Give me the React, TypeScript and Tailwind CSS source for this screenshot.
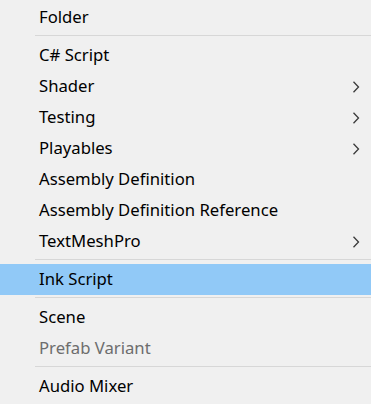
import React from 'react';

type Item =
  | { kind: 'sep' }
  | { kind: 'item'; label: string; sub?: boolean; active?: boolean; disabled?: boolean };

const items: Item[] = [
  { kind: 'item', label: 'Folder' },
  { kind: 'sep' },
  { kind: 'item', label: 'C# Script' },
  { kind: 'item', label: 'Shader', sub: true },
  { kind: 'item', label: 'Testing', sub: true },
  { kind: 'item', label: 'Playables', sub: true },
  { kind: 'item', label: 'Assembly Definition' },
  { kind: 'item', label: 'Assembly Definition Reference' },
  { kind: 'item', label: 'TextMeshPro', sub: true },
  { kind: 'sep' },
  { kind: 'item', label: 'Ink Script', active: true },
  { kind: 'sep' },
  { kind: 'item', label: 'Scene' },
  { kind: 'item', label: 'Prefab Variant', disabled: true },
  { kind: 'sep' },
  { kind: 'item', label: 'Audio Mixer' },
];

const Chevron = () => (
  <svg width="8" height="12" viewBox="0 0 8 12" className="absolute right-[11px] top-1/2 -translate-y-1/2">
    <polyline points="1.5,0.8 6.5,6 1.5,11.2" fill="none" stroke="#3a3a3a" strokeWidth="1.3" />
  </svg>
);

const App: React.FC = () => {
  return (
    <div
      className="h-[404px] w-[371px] overflow-hidden bg-[#f0f0f0] pt-[2px] text-[16.7px] text-black"
      style={{ fontFamily: '"Segoe UI", "Noto Sans", "Open Sans", sans-serif' }}
    >
      {items.map((it, i) =>
        it.kind === 'sep' ? (
          <div key={i} className="h-[7px] pt-[2px] pl-[35px]">
            <div className="h-px bg-[#d7d7d7]" />
          </div>
        ) : (
          <div
            key={i}
            className={`relative flex h-[31px] items-center pl-[39px] ${it.active ? 'bg-[#91c9f7]' : ''} ${
              it.disabled ? 'text-[#6d6d6d]' : ''
            }`}
          >
            <span className="leading-none">{it.label}</span>
            {it.sub && <Chevron />}
          </div>
        )
      )}
    </div>
  );
};

export default App;
